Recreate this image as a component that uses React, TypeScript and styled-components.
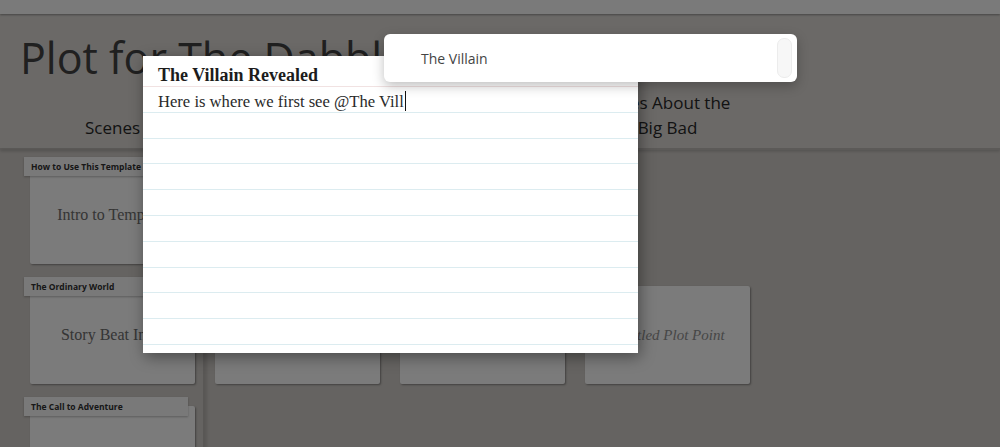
import React from 'react'
import styled, { createGlobalStyle } from 'styled-components'

const GlobalStyle = createGlobalStyle`
  html, body {
    margin: 0;
    padding: 0;
    overflow: hidden;
  }
  body {
    background: #cac6c2;
    font-family: 'Open Sans', 'Noto Sans', sans-serif;
  }
`

const Page = styled.div`
  position: relative;
  width: 1000px;
  height: 447px;
  overflow: hidden;
  background: #cac6c2;
  display: flex;
  flex-direction: column;
`

const TopBar = styled.div`
  height: 14px;
  flex: none;
  background: #f4f4f4;
  box-shadow: 0 1px 2px rgba(0, 0, 0, 0.35);
  position: relative;
  z-index: 1;
`

const Header = styled.header`
  height: 136px;
  flex: none;
  box-sizing: border-box;
  background: #d6d3cf;
  border-bottom: 2px solid #b8b4b0;
  box-shadow: 0 1px 3px rgba(0, 0, 0, 0.2);
  display: flex;
  flex-direction: column;
  justify-content: space-between;
  padding-bottom: 8px;
`

const Title = styled.h1`
  margin: 0;
  padding: 18px 0 0 20px;
  font-family: 'Open Sans', sans-serif;
  font-weight: 400;
  font-size: 43px;
  line-height: 52px;
  color: #404040;
  white-space: nowrap;
`

const ColumnHeads = styled.div`
  display: grid;
  grid-template-columns: repeat(4, 165px);
  column-gap: 20px;
  padding-left: 30px;
  align-items: end;
`

const ColumnHead = styled.div`
  text-align: center;
  font-size: 17px;
  line-height: 25px;
  color: #262626;
  white-space: nowrap;
`

const Board = styled.main`
  flex: 1;
  display: flex;
  padding-top: 7px;
`

const SceneColumn = styled.section`
  width: 205px;
  box-sizing: border-box;
  padding-left: 24px;
  border-right: 2px solid #b3afab;
  box-shadow: 2px 0 3px rgba(0, 0, 0, 0.12);
  display: flex;
  flex-direction: column;
  margin-top: -7px;
  padding-top: 7px;
`

const PlotArea = styled.section`
  display: grid;
  grid-template-columns: repeat(3, 165px);
  grid-auto-rows: 120px;
  column-gap: 20px;
  padding-left: 10px;
  align-content: start;
`

const Cell = styled.div<{ $empty?: boolean }>`
  height: 120px;
  display: flex;
  flex-direction: column;
  padding-top: ${p => (p.$empty ? '9px' : '0')};
  box-sizing: border-box;
`

const Tab = styled.div`
  position: relative;
  z-index: 1;
  width: 164px;
  height: 19px;
  box-sizing: border-box;
  padding-left: 7px;
  background: #f3f3f3;
  box-shadow: 0 1px 2px rgba(0, 0, 0, 0.25);
  font-family: 'Open Sans', sans-serif;
  font-weight: 700;
  font-size: 8.5px;
  line-height: 19px;
  color: #2e2e2e;
  white-space: nowrap;
`

const Card = styled.div<{ $indent?: boolean; $tabbed?: boolean }>`
  width: 165px;
  height: 98px;
  flex: none;
  margin-left: ${p => (p.$indent ? '6px' : '0')};
  margin-top: ${p => (p.$tabbed ? '-10px' : '0')};
  background: #f6f6f6;
  border-radius: 2px;
  box-shadow: 1px 1px 2px rgba(0, 0, 0, 0.35);
  display: flex;
  align-items: center;
  justify-content: center;
  font-family: 'Liberation Serif', serif;
  font-size: 16px;
  color: #6a6a6a;
`

const Placeholder = styled.span`
  font-style: italic;
  color: #8e8e8e;
  font-size: 15px;
`

const Overlay = styled.div`
  position: absolute;
  inset: 0;
  z-index: 10;
  background: rgba(0, 0, 0, 0.5);
`

const Modal = styled.div`
  position: absolute;
  z-index: 11;
  left: 143px;
  top: 56px;
  width: 495px;
  height: 297px;
  background: #fff;
  box-shadow: 2px 4px 14px rgba(0, 0, 0, 0.4);
  display: flex;
  flex-direction: column;
`

const ModalTitle = styled.div`
  height: 31px;
  box-sizing: border-box;
  padding: 8px 15px 0;
  border-bottom: 1px solid #f1e2e2;
  font-family: 'Liberation Serif', serif;
  font-weight: 700;
  font-size: 18px;
  line-height: 22px;
  color: #1c1c1c;
`

const Editor = styled.div`
  flex: 1;
  padding: 2px 15px 0;
  font-family: 'Liberation Serif', serif;
  font-size: 16.6px;
  line-height: 25.8px;
  color: #2a2a2a;
  background-image: repeating-linear-gradient(
    to bottom,
    transparent 0,
    transparent 24.8px,
    #dcecf0 24.8px,
    #dcecf0 25.8px
  );
`

const Caret = styled.span`
  display: inline-block;
  width: 1px;
  height: 20px;
  margin-left: 1px;
  background: #111;
  vertical-align: -4px;
`

const Suggestions = styled.div`
  position: absolute;
  z-index: 12;
  left: 384px;
  top: 34px;
  width: 413px;
  height: 48px;
  box-sizing: border-box;
  padding-left: 37px;
  background: #fff;
  border-radius: 6px;
  box-shadow: 0 4px 12px rgba(0, 0, 0, 0.25);
  display: flex;
  align-items: center;
  font-family: 'Open Sans', sans-serif;
  font-size: 14px;
  color: #444;
`

const ScrollThumb = styled.div`
  position: absolute;
  right: 5px;
  top: 4px;
  width: 13px;
  height: 38px;
  border-radius: 7px;
  background: #f7f7f7;
  border: 1px solid #ececec;
`

const scenes = [
  { label: 'How to Use This Template', text: 'Intro to Template' },
  { label: 'The Ordinary World', text: 'Story Beat Intro' },
  { label: 'The Call to Adventure', text: '' }
]

export default function App() {
  return (
    <>
      <GlobalStyle />
      <Page>
        <TopBar />
        <Header>
          <Title>Plot for The Dabbler's Tale</Title>
          <ColumnHeads>
            <ColumnHead>Scenes</ColumnHead>
            <ColumnHead>Main Plot</ColumnHead>
            <ColumnHead>Subplot</ColumnHead>
            <ColumnHead>Clues About the<br />Big Bad</ColumnHead>
          </ColumnHeads>
        </Header>
        <Board>
          <SceneColumn>
            {scenes.map(scene => (
              <Cell key={scene.label}>
                <Tab>{scene.label}</Tab>
                <Card $indent $tabbed>{scene.text}</Card>
              </Cell>
            ))}
          </SceneColumn>
          <PlotArea>
            <Cell />
            <Cell />
            <Cell />
            <Cell $empty><Card /></Cell>
            <Cell $empty><Card /></Cell>
            <Cell $empty>
              <Card><Placeholder>Untitled Plot Point</Placeholder></Card>
            </Cell>
          </PlotArea>
        </Board>
        <Overlay />
        <Modal>
          <ModalTitle>The Villain Revealed</ModalTitle>
          <Editor>
            Here is where we first see @The Vill<Caret />
          </Editor>
        </Modal>
        <Suggestions>
          The Villain
          <ScrollThumb />
        </Suggestions>
      </Page>
    </>
  )
}
